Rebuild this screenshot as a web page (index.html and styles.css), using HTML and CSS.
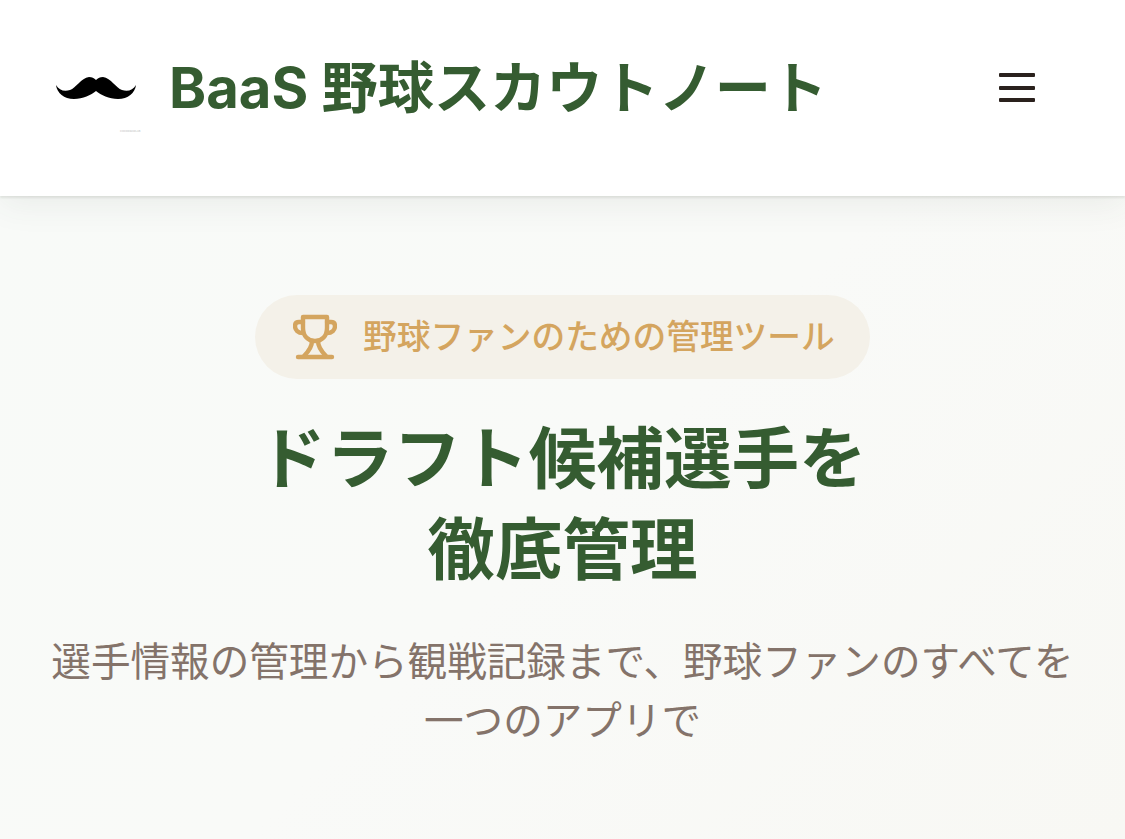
FILE: index.html
```html
<!DOCTYPE html>
<html lang="ja">
<head>
<meta charset="utf-8">
<title>BaaS 野球スカウトノート</title>
<link rel="stylesheet" href="styles.css">
</head>
<body>
<header class="site-header">
  <div class="brand">
    <div class="logo">
      <svg class="logo-mark" viewBox="0 0 80 28" width="80" height="28" aria-hidden="true">
        <path d="M0 10 C3 15 8 17 14 15 C20 13 25 3 33 2 C36 2 38 3 40 5 C42 3 44 2 47 2 C55 3 60 13 66 15 C72 17 77 15 80 10 C79 18 72 24 62 24 C53 24 45 20 40 16 C35 20 27 24 18 24 C8 24 1 18 0 10 Z" fill="#000"/>
      </svg>
      <span class="logo-tag">COCODRAWLAB</span>
    </div>
    <h1 class="brand-name">BaaS 野球スカウトノート</h1>
  </div>
  <button class="menu-btn" aria-label="メニュー">
    <span></span><span></span><span></span>
  </button>
</header>
<main class="hero">
  <div class="pill">
    <svg class="pill-icon" viewBox="0 0 44 46" width="44" height="46" aria-hidden="true">
      <g fill="none" stroke="#d4a55f" stroke-width="4.4" stroke-linecap="round" stroke-linejoin="round">
        <path d="M10 3 H34 V14 C34 22 29 27 22 27 C15 27 10 22 10 14 Z"/>
        <path d="M10 8 H6 C3 8 2 10 2 12 C2 16 5 19 10 19"/>
        <path d="M34 8 H38 C41 8 42 10 42 12 C42 16 39 19 34 19"/>
        <path d="M19 27 C19 32 17 36 11 42"/>
        <path d="M25 27 C25 32 27 36 33 42"/>
        <path d="M5 43 H39"/>
      </g>
    </svg>
    <span class="pill-text">野球ファンのための管理ツール</span>
  </div>
  <h2 class="hero-title">ドラフト候補選手を<br>徹底管理</h2>
  <p class="hero-lead">選手情報の管理から観戦記録まで、野球ファンのすべてを一つのアプリで</p>
</main>
</body>
</html>
```
FILE: styles.css
```css
* { box-sizing: border-box; }
html, body { margin: 0; height: 100%; }
body {
  font-family: Inter, "Noto Sans CJK JP", sans-serif;
  background: #fff;
  overflow: hidden;
}
.site-header {
  position: relative;
  z-index: 1;
  height: 196px;
  padding: 0 90px 0 56px;
  display: flex;
  justify-content: space-between;
  align-items: flex-start;
  background: #fff;
  box-shadow: 0 2px 2px rgba(60, 70, 50, 0.1), 0 8px 32px rgba(60, 80, 60, 0.08);
}
.brand { display: flex; align-items: flex-start; gap: 33px; padding-top: 50px; }
.logo { position: relative; width: 80px; height: 82px; padding-top: 25px; }
.logo-mark { display: block; }
.logo-tag {
  position: absolute;
  left: 64px;
  top: 80px;
  font-size: 2.6px;
  line-height: 3px;
  color: #bbb;
  white-space: nowrap;
}
.brand-name {
  margin: 0;
  font-size: 56.2px;
  line-height: 76px;
  font-weight: 700;
  color: #355c31;
  white-space: nowrap;
}
.menu-btn {
  margin-top: 73px;
  width: 36px;
  height: 29px;
  padding: 0;
  border: 0;
  background: none;
  display: flex;
  flex-direction: column;
  justify-content: space-between;
}
.menu-btn span { display: block; height: 4px; border-radius: 1px; background: #2a211d; }
.hero {
  height: 643px;
  padding-top: 99px;
  display: flex;
  flex-direction: column;
  align-items: center;
  text-align: center;
  background: linear-gradient(135deg, #f8faf8 0%, #f9faf8 50%, #f8f8f4 100%);
}
.pill {
  width: 615px;
  height: 84px;
  padding-left: 38px;
  display: flex;
  align-items: center;
  gap: 26px;
  border-radius: 42px;
  background: #f4f1e9;
}
.pill-icon { flex: none; }
.pill-text { font-size: 33.7px; line-height: 80px; font-weight: 500; color: #d4a55f; white-space: nowrap; }
.hero-title {
  margin: 34px 0 0;
  font-size: 67.6px;
  line-height: 91px;
  font-weight: 700;
  color: #355c31;
}
.hero-lead {
  margin: 38px 0 0;
  padding: 0 40px;
  font-size: 39.6px;
  line-height: 59px;
  font-weight: 400;
  color: #84736a;
}
```
